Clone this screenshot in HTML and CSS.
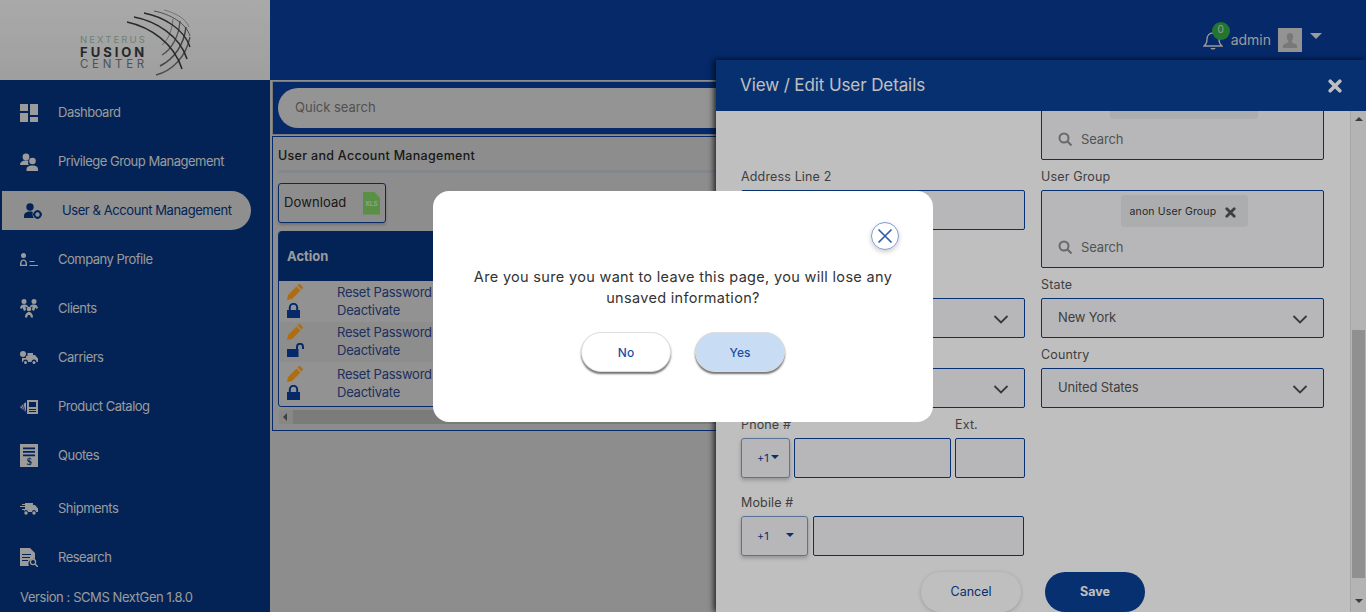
FILE: index.html
```html
<!DOCTYPE html>
<html lang="en">
<head>
    <meta charset="UTF-8">
    <meta name="viewport" content="width=device-width, initial-scale=1.0">
    <title>User and Account Management</title>
    <link rel="stylesheet" href="styles.css">
</head>
<body>
    <div class="app">
        <aside class="sidebar">
            <div class="logo">
                <div class="logo-text">
                    <span class="logo-top">NEXTERUS</span>
                    <span class="logo-mid">FUSION</span>
                    <span class="logo-bot">CENTER</span>
                </div>
                <svg class="logo-globe" width="68" height="68" viewBox="0 0 68 68" fill="none" stroke="#34373a">
                    <path d="M3 13C26 18 50 34 58 60" stroke-width="1.5"/>
                    <path d="M10 8C32 12 56 27 63 50" stroke-width="1.5"/>
                    <path d="M20 4C40 8 60 20 66 38" stroke-width="1.4"/>
                    <path d="M30 2C46 5 62 14 66 27" stroke-width="1" opacity=".7"/>
                    <path d="M40 1C52 4 62 10 65 18" stroke-width=".8" opacity=".5"/>
                    <path d="M32 66C48 62 62 48 66 28" stroke-width="1.4" opacity=".7"/>
                    <path d="M36 57C50 50 60 36 62 18" stroke-width="1.5" opacity=".8"/>
                    <path d="M38 46C48 40 55 27 56 12" stroke-width="1.3" opacity=".7"/>
                    <path d="M38 36C44 31 48 22 49 10" stroke-width="1" opacity=".5"/>
                </svg>
            </div>
            <nav class="nav">
                <a class="nav-item">
                    <svg class="nav-icon" width="18" height="18" viewBox="0 0 18 18"><path d="M0 0h8v7H0zM10 0h8v11h-8zM0 9h8v9H0zM10 13h8v5h-8z"/></svg>
                    <span>Dashboard</span>
                </a>
                <a class="nav-item">
                    <svg class="nav-icon" width="18" height="18" viewBox="0 0 18 18"><circle cx="6" cy="4" r="3.4"/><path d="M0 12c0-3 2-4.500 6-4.500 1 0 2 .1 2.600.4-1 1.300-.6 3.100.4 4.100H0z"/><circle cx="12.500" cy="8" r="3.300"/><path d="M6.500 18v-1.500c0-3 2.500-4 6-4s5.500 1 5.500 4V18z"/></svg>
                    <span>Privilege Group Management</span>
                </a>
                <a class="nav-item active">
                    <svg class="nav-icon" width="18" height="16" viewBox="0 0 18 16"><circle cx="6" cy="4" r="3.700"/><path d="M0 15v-2c0-3 2.500-4.500 6-4.500 1 0 2 .1 2.800.4-.5 1.800-.2 4.300 1 6.100z"/><circle cx="13.500" cy="11.500" r="3.200" fill="none" stroke="currentColor" stroke-width="2"/><path d="M12.800 7h1.400v1.500h-1.400zM12.800 14.500h1.400V16h-1.400zM9 10.800h1.500v1.400H9zM16.500 10.800H18v1.400h-1.500z"/></svg>
                    <span>User &amp; Account Management</span>
                </a>
                <a class="nav-item">
                    <svg class="nav-icon" width="18" height="14" viewBox="0 0 18 14"><circle cx="3.500" cy="2.500" r="2.500"/><path d="M0 13v-2c0-3 1.500-4.500 3.500-4.500S7 8 7 11v2zM1.500 11.800h4v-1c0-1.800-.8-3-2-3s-2 1.200-2 3z" fill-rule="evenodd"/><path d="M9.500 8h5v1h-5zM9.500 12h8.500v1H9.500z"/></svg>
                    <span>Company Profile</span>
                </a>
                <a class="nav-item">
                    <svg class="nav-icon" width="18" height="19" viewBox="0 0 18 19"><circle cx="4" cy="2.500" r="2.500"/><circle cx="14" cy="2.500" r="2.500"/><circle cx="9" cy="10" r="2.300"/><path d="M0 9c.5-2.500 2-3.500 4-3.500S7 6 8.300 7.500L7 8.600C6.200 7.800 5.800 7.500 5.500 7.500L6 11 4 12 2.500 8.500 1.400 10zM18 9c-.5-2.500-2-3.500-4-3.500S11 6 9.700 7.500L11 8.600c.8-.8 1.200-1.100 1.500-1.100L12 11l2 1 1.500-3.500 1.100 1.500zM5 18.500c0-3 1.500-5.500 4-5.500s4 2.500 4 5.500h-2l-1-2.500H8l-1 2.500z"/></svg>
                    <span>Clients</span>
                </a>
                <a class="nav-item">
                    <svg class="nav-icon" width="18" height="13" viewBox="0 0 18 13"><circle cx="3" cy="3" r="3"/><path d="M2 7h4V5h1.500V2H13v2h2l3 3.500V11h-1.500a2.500 2.500 0 0 0-5 0H8a2.500 2.500 0 0 0-5 0H2z"/><circle cx="5.500" cy="11.500" r="1.500"/><circle cx="14" cy="11.500" r="1.500"/></svg>
                    <span>Carriers</span>
                </a>
                <a class="nav-item">
                    <svg class="nav-icon" width="18" height="14" viewBox="0 0 18 14"><path d="M7 0h11v14H7z"/><path d="M6 2v10.500L0 7z"/><path d="M3 4l2.500 8M1.500 5.500l3 6.500" stroke="#042f74" stroke-width=".8"/><path d="M9 2h7v5H9zM9 9h7v1H9zM9 11h7v1H9z" fill="#042f74"/></svg>
                    <span>Product Catalog</span>
                </a>
                <a class="nav-item quotes">
                    <svg class="nav-icon" width="18" height="23" viewBox="0 0 18 23"><path d="M0 0h18v23H0z"/><path d="M3 3.500h12v1.700H3zM3 7h12v1.700H3zM3 10.500h12v1.700H3z" fill="#042f74"/><text x="9" y="20.500" text-anchor="middle" class="quote-sign">$</text></svg>
                    <span>Quotes</span>
                </a>
                <a class="nav-item">
                    <svg class="nav-icon" width="18" height="12" viewBox="0 0 18 12"><path d="M5 0h8v2h2l3 3.500V9h-2a2 2 0 0 0-4 0H8a2 2 0 0 0-4 0V7H2V6h3V4H0V3h5V2H2V1h3z"/><circle cx="6" cy="10" r="1.700"/><circle cx="14" cy="10" r="1.700"/></svg>
                    <span>Shipments</span>
                </a>
                <a class="nav-item">
                    <svg class="nav-icon" width="18" height="19" viewBox="0 0 18 19"><path d="M0 0h10l5 5v6a5 5 0 0 0-6 7H0z"/><path d="M2 6h9v1H2zM2 9h8v1H2zM2 12h6v1H2z" fill="#042f74"/><circle cx="13" cy="14" r="2.600" fill="none" stroke="currentColor" stroke-width="1.300"/><path d="M15 16l3 3" stroke="currentColor" stroke-width="1.500"/></svg>
                    <span>Research</span>
                </a>
            </nav>
            <div class="version">Version : SCMS NextGen 1.8.0</div>
        </aside>

        <div class="content">
            <header class="topbar">
                <div class="bell-wrap">
                    <svg width="20" height="20" viewBox="0 0 20 20" fill="none" stroke="#cdcdcd" stroke-width="1.300"><path d="M1 16c2-1.500 3-3 3-6.500C4 5.500 6.500 3 10 3s6 2.500 6 6.500c0 3.500 1 5 3 6.500z"/><path d="M8 18c.5 1 3.500 1 4 0" stroke-width="1.500"/></svg>
                    <span class="badge">0</span>
                </div>
                <span class="user-name">admin</span>
                <div class="avatar">
                    <svg width="14" height="15" viewBox="0 0 14 15" fill="#a0a0a0"><path d="M7 0c2 0 3.200 1.500 3.200 3.800 0 1.700-.7 3.200-1.500 4v1.500L14 12v3H0v-3l5.300-2.700V7.800C4.500 7 3.800 5.500 3.800 3.800 3.800 1.500 5 0 7 0z"/></svg>
                </div>
                <span class="caret"></span>
            </header>
            <main class="main">
                <div class="search-strip">
                    <div class="search-pill">Quick search</div>
                </div>
                <section class="card">
                    <h2 class="card-title">User and Account Management</h2>
                    <div class="rule"></div>
                    <button class="download">
                        <span class="download-label">Download</span>
                        <span class="xls">XLS</span>
                    </button>
                    <div class="grid-wrap">
                        <div class="grid-head">Action</div>
                        <div class="grid-row row-a">
                            <div class="row-icons">
                                <svg class="pencil" width="16" height="16" viewBox="0 0 16 16"><path d="M0 16l1-5 8.500-8.500 4 4L5 15zM10.500 1.500l1.200-1.200c.5-.4 1-.4 1.500 0l2.500 2.500c.4.500.4 1 0 1.500l-1.200 1.200z"/></svg>
                                <svg class="lock" width="13" height="15" viewBox="0 0 13 15"><path d="M0 7h1.800V4.500a4.700 4.700 0 0 1 9.400 0V7H13v8H0zM3.800 7h5.400V4.500a2.700 2.700 0 0 0-5.400 0z" fill-rule="evenodd"/></svg>
                            </div>
                            <div class="row-links"><span>Reset Password</span><span>Deactivate</span></div>
                        </div>
                        <div class="grid-row row-b">
                            <div class="row-icons">
                                <svg class="pencil" width="16" height="16" viewBox="0 0 16 16"><path d="M0 16l1-5 8.500-8.500 4 4L5 15zM10.500 1.500l1.200-1.200c.5-.4 1-.4 1.500 0l2.500 2.500c.4.500.4 1 0 1.500l-1.200 1.200z"/></svg>
                                <svg class="lock" width="17" height="14" viewBox="0 0 17 14"><path d="M0 6h9V3.800a4 4 0 0 1 8 0V6h-2V3.800a2 2 0 0 0-4 0V6h.5v8H0z"/></svg>
                            </div>
                            <div class="row-links"><span>Reset Password</span><span>Deactivate</span></div>
                        </div>
                        <div class="grid-row row-c">
                            <div class="row-icons">
                                <svg class="pencil" width="16" height="16" viewBox="0 0 16 16"><path d="M0 16l1-5 8.500-8.500 4 4L5 15zM10.500 1.500l1.200-1.200c.5-.4 1-.4 1.500 0l2.500 2.500c.4.500.4 1 0 1.500l-1.200 1.200z"/></svg>
                                <svg class="lock" width="13" height="15" viewBox="0 0 13 15"><path d="M0 7h1.800V4.500a4.700 4.700 0 0 1 9.400 0V7H13v8H0zM3.800 7h5.400V4.500a2.700 2.700 0 0 0-5.400 0z" fill-rule="evenodd"/></svg>
                            </div>
                            <div class="row-links"><span>Reset Password</span><span>Deactivate</span></div>
                        </div>
                    </div>
                    <div class="hscroll">
                        <span class="hscroll-arrow"></span>
                        <span class="hscroll-thumb"></span>
                    </div>
                </section>
            </main>
        </div>
    </div>

    <aside class="drawer">
        <div class="drawer-head">
            <h3>View / Edit User Details</h3>
            <svg width="14" height="14" viewBox="0 0 14 14" fill="none" stroke="#fff" stroke-width="3.600" stroke-linecap="round"><path d="M2.200 2.200l9.600 9.600M11.800 2.200l-9.600 9.600"/></svg>
        </div>
        <div class="drawer-main">
            <div class="drawer-body">
                <form class="user-form">
                    <div class="field"></div>
                    <div class="field">
                        <div class="box tag-box">
                            <span class="chip chip-wide"></span>
                            <div class="tag-search">
                                <svg width="14" height="14" viewBox="0 0 14 14" fill="none" stroke="#8a8c8e" stroke-width="2"><circle cx="6" cy="6" r="4.500"/><path d="M9.500 9.500l4 4"/></svg>
                                Search
                            </div>
                        </div>
                    </div>

                    <div class="field">
                        <label>Address Line 2</label>
                        <div class="box short"></div>
                    </div>
                    <div class="field">
                        <label>User Group</label>
                        <div class="box tag-box">
                            <span class="chip">anon User Group
                                <svg width="11" height="11" viewBox="0 0 11 11" fill="none" stroke="#555" stroke-width="2.800" stroke-linecap="round"><path d="M1.800 1.800l7.400 7.400M9.200 1.800l-7.400 7.400"/></svg>
                            </span>
                            <div class="tag-search">
                                <svg width="14" height="14" viewBox="0 0 14 14" fill="none" stroke="#8a8c8e" stroke-width="2"><circle cx="6" cy="6" r="4.500"/><path d="M9.500 9.500l4 4"/></svg>
                                Search
                            </div>
                        </div>
                    </div>

                    <div class="field">
                        <label></label>
                        <div class="box short select">
                            <svg width="16" height="9" viewBox="0 0 16 9" fill="none" stroke="#4a4c4e" stroke-width="1.800"><path d="M1.500 1l6.500 6.500L14.500 1"/></svg>
                        </div>
                    </div>
                    <div class="field">
                        <label>State</label>
                        <div class="box short select">
                            New York
                            <svg width="16" height="9" viewBox="0 0 16 9" fill="none" stroke="#4a4c4e" stroke-width="1.800"><path d="M1.500 1l6.500 6.500L14.500 1"/></svg>
                        </div>
                    </div>

                    <div class="field">
                        <label></label>
                        <div class="box short select">
                            <svg width="16" height="9" viewBox="0 0 16 9" fill="none" stroke="#4a4c4e" stroke-width="1.800"><path d="M1.500 1l6.500 6.500L14.500 1"/></svg>
                        </div>
                    </div>
                    <div class="field">
                        <label>Country</label>
                        <div class="box short select">
                            United States
                            <svg width="16" height="9" viewBox="0 0 16 9" fill="none" stroke="#4a4c4e" stroke-width="1.800"><path d="M1.500 1l6.500 6.500L14.500 1"/></svg>
                        </div>
                    </div>

                    <div class="phone-row">
                        <div class="field grow">
                            <label>Phone #</label>
                            <div class="input-group">
                                <span class="dial dial-small">+1<i></i></span>
                                <div class="box short grow"></div>
                            </div>
                        </div>
                        <div class="field ext">
                            <label>Ext.</label>
                            <div class="box short"></div>
                        </div>
                    </div>
                    <div class="field"></div>

                    <div class="field mobile">
                        <label>Mobile #</label>
                        <div class="input-group wide-gap">
                            <span class="dial dial-wide">+1<i></i></span>
                            <div class="box short grow"></div>
                        </div>
                    </div>
                </form>
                <div class="form-actions">
                    <button class="btn-cancel">Cancel</button>
                    <button class="btn-save">Save</button>
                </div>
            </div>
            <div class="vscroll">
                <span class="arrow-up"></span>
                <span class="vscroll-thumb"></span>
                <span class="arrow-down"></span>
            </div>
        </div>
    </aside>

    <div class="backdrop"></div>

    <div class="dialog">
        <div class="dialog-top">
            <span class="dialog-close">
                <svg width="16" height="16" viewBox="0 0 16 16" fill="none" stroke="#2f5fae" stroke-width="1.700"><path d="M1.500 1.500l13 13M14.500 1.500l-13 13"/></svg>
            </span>
        </div>
        <p>Are you sure you want to leave this page, you will lose any unsaved information?</p>
        <div class="dialog-actions">
            <button class="btn-no">No</button>
            <button class="btn-yes">Yes</button>
        </div>
    </div>
</body>
</html>
```

FILE: styles.css
```css
* {
    box-sizing: border-box;
}
html, body {
    height: 100%;
}
body {
    margin: 0;
    overflow: hidden;
    font-family: Inter, "Open Sans", sans-serif;
    font-size: 13px;
    color: #333;
    background-color: #bdbdbd;
}
.app {
    display: flex;
    height: 100vh;
}

/* sidebar */
.sidebar {
    width: 270px;
    flex-shrink: 0;
    display: flex;
    flex-direction: column;
    background-color: #042f74;
    color: #cfcfcf;
}
.logo {
    height: 80px;
    background: linear-gradient(#e2e2e2, #d4d4d4);
    position: relative;
    padding: 34px 0 0 80px;
}
.logo-text {
    display: flex;
    flex-direction: column;
    width: 70px;
    line-height: 12px;
}
.logo-top {
    font-size: 9.5px;
    letter-spacing: 2.1px;
    color: #8fae9c;
}
.logo-mid {
    font-size: 13px;
    font-weight: 700;
    letter-spacing: 3px;
    color: #33363a;
}
.logo-bot {
    font-size: 11.5px;
    letter-spacing: 3.7px;
    color: #6b6e70;
}
.logo-globe {
    position: absolute;
    left: 124px;
    top: 9px;
}
.nav {
    display: flex;
    flex-direction: column;
    padding-top: 8px;
}
.nav-item {
    height: 49px;
    display: flex;
    align-items: center;
    padding-left: 20px;
    letter-spacing: -0.5px;
    font-size: 13px;
}
.nav-item span {
    margin-bottom: 2px;
}
.nav-icon {
    fill: currentColor;
    width: 18px;
    margin-right: 20px;
    flex-shrink: 0;
}
.nav-item.active {
    height: 39px;
    margin: 5px 19px 5px 2px;
    padding-left: 22px;
    letter-spacing: -0.42px;
    background-color: #bfbfbf;
    color: #042f74;
    border-radius: 0 20px 20px 0;
}
.nav-item.quotes {
    margin-bottom: 4px;
}
.quote-sign {
    font-family: "Liberation Serif", serif;
    font-size: 10px;
    font-weight: 700;
    fill: #042f74;
}
.version {
    margin-top: auto;
    padding: 0 0 7px 20px;
    font-size: 13px;
    letter-spacing: -0.42px;
}

/* top bar and page */
.content {
    flex: 1;
    min-width: 0;
    display: flex;
    flex-direction: column;
}
.topbar {
    height: 80px;
    flex-shrink: 0;
    background-color: #07378d;
    display: flex;
    align-items: flex-start;
    padding: 28px 44px 0 0;
    justify-content: flex-end;
    color: #cfcfcf;
}
.bell-wrap {
    position: relative;
    width: 20px;
    height: 22px;
    margin-top: 2px;
    margin-right: 8px;
}
.badge {
    position: absolute;
    left: 9px;
    top: -8px;
    width: 18px;
    height: 18px;
    border-radius: 50%;
    background-color: #2f9e3f;
    font-size: 10px;
    line-height: 15px;
    text-align: center;
}
.user-name {
    font-size: 14px;
    margin-top: 3px;
    margin-right: 7px;
}
.avatar {
    width: 24px;
    height: 24px;
    background-color: #c4c4c4;
    display: flex;
    align-items: center;
    justify-content: center;
}
.caret {
    margin: 5px 0 0 8px;
    border-left: 6px solid transparent;
    border-right: 6px solid transparent;
    border-top: 6px solid #cfcfcf;
}
.main {
    flex: 1;
    padding: 1px 2px;
}
.search-strip {
    height: 54px;
    padding: 6px 5px;
    background-color: #07378d;
    border: 1px solid #a0a0a0;
}
.search-pill {
    height: 40px;
    padding: 0 17px;
    line-height: 39px;
    border-radius: 20px 0 0 20px;
    background-color: #c6c6c6;
    color: #6c6c6c;
}
.card {
    margin-top: 1px;
    height: 295px;
    padding: 1px 5px 0;
    border: 1px solid #07378d;
}
.card-title {
    margin: 0;
    height: 35px;
    font-size: 12.5px;
    font-weight: 500;
    letter-spacing: 0.3px;
    line-height: 35px;
    color: #222;
    border-bottom: 3px solid #b0b4ba;
}
.download {
    display: flex;
    align-items: center;
    justify-content: space-between;
    width: 108px;
    height: 40px;
    margin: 10px 0 8px;
    padding: 0 5px 0 5px;
    font: inherit;
    letter-spacing: 0.1px;
    color: #222;
    background: none;
    border: 1px solid #07378d;
    border-radius: 3px;
    box-shadow: 0 2px 3px rgba(0, 0, 0, 0.2);
}
.download-label {
    margin-bottom: 2px;
}
.xls {
    width: 17px;
    height: 23px;
    background-color: #79c15c;
    color: #dce8d5;
    font-size: 6.5px;
    letter-spacing: 0;
    line-height: 24px;
    text-align: center;
    clip-path: polygon(0 0, 65% 0, 100% 28%, 100% 100%, 0 100%);
}
.grid-wrap {
    border: 1px solid #07378d;
    border-top: none;
    border-radius: 4px;
    overflow: hidden;
}
.grid-head {
    height: 50px;
    padding-left: 8px;
    line-height: 50px;
    font-weight: 700;
    color: #cfcfcf;
    background-color: #042f74;
}
.grid-row {
    display: flex;
    padding-left: 8px;
}
.row-a {
    height: 41px;
    padding-top: 2px;
    background-color: #c3c3c3;
}
.row-b {
    height: 40px;
    padding-top: 1px;
}
.row-c {
    height: 44px;
    padding-top: 3px;
    background-color: #c3c3c3;
}
.row-icons {
    width: 50px;
    padding-top: 1px;
    display: flex;
    flex-direction: column;
    gap: 3px;
}
.pencil {
    fill: #ea9216;
    display: block;
}
.lock {
    fill: #07378d;
    display: block;
}
.row-links {
    display: flex;
    flex-direction: column;
    line-height: 18px;
    letter-spacing: -0.25px;
    color: #28407e;
}
.hscroll {
    display: flex;
    align-items: center;
    height: 14px;
    margin: 3px 0 0 1px;
    background-color: #b4b4b4;
}
.hscroll-arrow {
    margin: 0 6px 0 4px;
    border-top: 4px solid transparent;
    border-bottom: 4px solid transparent;
    border-right: 4px solid #555;
}
.hscroll-thumb {
    flex: 1;
    height: 100%;
    background-color: #a5a5a5;
}

/* user details drawer */
.drawer {
    position: absolute;
    top: 60px;
    left: 716px;
    right: 0;
    bottom: 0;
    display: flex;
    flex-direction: column;
    background-color: #fff;
    box-shadow: -2px 0 6px rgba(0, 0, 0, 0.8);
}
.drawer-head {
    height: 51px;
    flex-shrink: 0;
    display: flex;
    align-items: center;
    justify-content: space-between;
    padding: 0 24px;
    background-color: #094095;
    color: #fff;
}
.drawer-head h3 {
    margin: 0 0 2px;
    font-size: 17px;
    font-weight: 400;
    letter-spacing: -0.1px;
}
.drawer-main {
    flex: 1;
    min-height: 0;
    display: flex;
}
.drawer-body {
    flex: 1;
    min-width: 0;
    overflow: hidden;
}
.user-form {
    display: grid;
    grid-template-columns: 284px 283px;
    column-gap: 16px;
    row-gap: 8px;
    margin: -29px 0 0 25px;
}
.field label {
    display: block;
    height: 16px;
    margin-bottom: 6px;
    line-height: 18px;
    color: #555;
    font-size: 12.5px;
    letter-spacing: 0.15px;
}
.box {
    height: 78px;
    background-color: #f4f5f7;
    border: 1px solid #094095;
    border-radius: 2px;
    color: #555;
}
.box.short {
    height: 40px;
}
.select {
    display: flex;
    align-items: center;
    padding: 0 15px 2px 16px;
    letter-spacing: -0.15px;
}
.select svg {
    margin: 4px 0 0 auto;
}
.tag-box {
    display: flex;
    flex-direction: column;
    padding-top: 4px;
}
.chip {
    display: flex;
    align-items: center;
    justify-content: space-between;
    align-self: center;
    width: 127px;
    height: 32px;
    margin-left: 3px;
    padding: 0 12px 0 9px;
    font-size: 10.5px;
    letter-spacing: 0.15px;
    color: #333;
    background-color: #e6e7e9;
    border-radius: 3px;
}
.chip svg {
    margin-top: 2px;
}
.chip-wide {
    width: 148px;
}
.tag-search {
    display: flex;
    align-items: center;
    gap: 9px;
    margin-top: 12px;
    padding-left: 16px;
    letter-spacing: -0.15px;
    color: #6d6f71;
}
.phone-row {
    display: flex;
    gap: 4px;
}
.grow {
    flex: 1;
    min-width: 0;
}
.ext {
    width: 70px;
}
.input-group {
    display: flex;
    gap: 4px;
}
.wide-gap {
    gap: 5px;
    margin-right: 1px;
}
.dial {
    height: 40px;
    display: flex;
    align-items: center;
    font-size: 11px;
    color: #094095;
    border: 1px solid #7c9ac8;
    border-radius: 3px;
    background-color: #f4f5f7;
    box-shadow: 0 2px 4px rgba(0, 0, 0, 0.25);
}
.dial i {
    border-left: 4px solid transparent;
    border-right: 4px solid transparent;
    border-top: 4px solid #094095;
    margin-top: -2px;
}
.dial-small {
    width: 49px;
    padding-left: 15px;
    gap: 2px;
}
.dial-wide {
    width: 67px;
    padding-left: 15px;
    gap: 17px;
}
.mobile {
    margin-top: 8px;
}
.form-actions {
    display: flex;
    justify-content: center;
    gap: 24px;
    margin-top: 16px;
}
.form-actions button {
    width: 100px;
    height: 40px;
    padding-bottom: 3px;
    border: none;
    border-radius: 20px;
    font: inherit;
    font-size: 12.5px;
}
.btn-cancel {
    background-color: #fff;
    color: #094095;
    box-shadow: 0 1px 4px rgba(0, 0, 0, 0.2);
}
.form-actions .btn-save {
    background-color: #094095;
    color: #fff;
    font-weight: 700;
}
.vscroll {
    width: 16px;
    flex-shrink: 0;
    display: flex;
    flex-direction: column;
    align-items: center;
    background-color: #f1f1f1;
    border-left: 1px solid #dcdcdc;
}
.arrow-up, .arrow-down {
    border-left: 4px solid transparent;
    border-right: 4px solid transparent;
}
.arrow-up {
    margin-top: 6px;
    border-bottom: 4px solid #505050;
}
.arrow-down {
    margin-top: 21px;
    border-top: 4px solid #505050;
}
.vscroll-thumb {
    width: 13px;
    height: 248px;
    margin-top: 209px;
    background-color: #c1c1c1;
}

/* overlay and confirm dialog */
.backdrop {
    position: fixed;
    inset: 0;
    background-color: rgba(0, 0, 0, 0.25);
}
.dialog {
    position: absolute;
    top: 191px;
    left: 433px;
    width: 500px;
    height: 231px;
    padding: 31px 34px 0;
    background-color: #fff;
    border-radius: 16px;
    text-align: center;
}
.dialog-top {
    display: flex;
    justify-content: flex-end;
    height: 28px;
}
.dialog-close {
    width: 28px;
    height: 28px;
    display: flex;
    align-items: center;
    justify-content: center;
    border: 1px solid #7c9ac8;
    border-radius: 50%;
    box-shadow: 0 2px 5px rgba(0, 0, 0, 0.2);
}
.dialog p {
    margin: 16px 0 0;
    font-size: 14.5px;
    letter-spacing: 0.32px;
    line-height: 21px;
    color: #333;
}
.dialog-actions {
    display: flex;
    justify-content: center;
    gap: 24px;
    margin-top: 24px;
}
.dialog-actions button {
    width: 90px;
    height: 40px;
    border: 1px solid #ddd;
    border-radius: 20px;
    font: inherit;
    font-size: 12px;
    font-weight: 500;
    color: #1d4ea3;
    box-shadow: 0 2px 2px rgba(0, 0, 0, 0.55);
}
.btn-no {
    background-color: #fff;
}
.btn-yes {
    background-color: #c8dcf3;
}
```
